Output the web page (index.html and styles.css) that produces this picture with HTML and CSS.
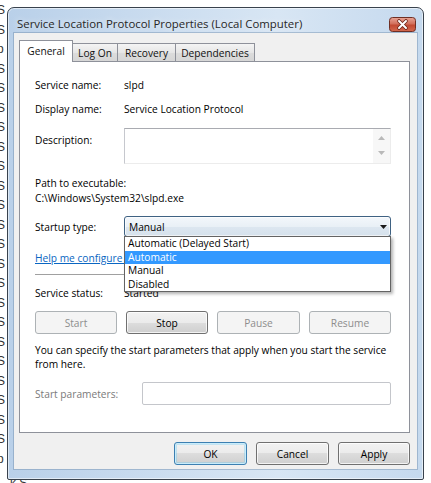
FILE: index.html
```html
<!DOCTYPE html>
<html>
<head>
<meta charset="utf-8">
<link rel="stylesheet" href="styles.css">
</head>
<body>
<div class="desktop-list">
  <div>S</div><div>S</div><div>p</div><div>S</div><div>S</div><div>S</div><div>S</div><div>S</div>
  <div>S</div><div>S</div><div>S</div><div>S</div><div>S</div><div>S</div><div>S</div><div>S</div>
  <div>S</div><div>S</div><div>S</div><div>S</div><div>S</div><div>S</div><div>S</div><div>p</div>
</div>
<div class="desktop-foot">k S</div>

<div class="window">
  <div class="titlebar">
    <span class="title">Service Location Protocol Properties (Local Computer)</span>
    <div class="close-btn">
      <svg width="27" height="15" viewBox="0 0 27 15">
        <defs>
          <linearGradient id="cg" x1="0" y1="0" x2="0" y2="1">
            <stop offset="0" stop-color="#e8a596"/>
            <stop offset="0.45" stop-color="#d2705c"/>
            <stop offset="0.55" stop-color="#c24a33"/>
            <stop offset="1" stop-color="#d3694f"/>
          </linearGradient>
        </defs>
        <rect x="0.5" y="0.5" width="26" height="14" rx="3" fill="url(#cg)" stroke="#6e2f24"/>
        <path d="M10 4 L17 11 M17 4 L10 11" stroke="#6a2418" stroke-width="3.6" stroke-linecap="round"/>
        <path d="M10 4 L17 11 M17 4 L10 11" stroke="#ffffff" stroke-width="2" stroke-linecap="round"/>
      </svg>
    </div>
  </div>

  <div class="client">
    <div class="tabs">
      <div class="tab tab-active">General</div>
      <div class="tab tab-logon">Log On</div>
      <div class="tab tab-recovery">Recovery</div>
      <div class="tab tab-deps">Dependencies</div>
    </div>

    <div class="panel">
      <div class="row row-first">
        <span class="label">Service name:</span>
        <span class="value">slpd</span>
      </div>
      <div class="row row-display">
        <span class="label">Display name:</span>
        <span class="value">Service Location Protocol</span>
      </div>
      <div class="row row-desc">
        <span class="label label-desc">Description:</span>
        <div class="desc-box">
          <div class="desc-scroll">
            <svg width="7" height="4" viewBox="0 0 7 4"><path d="M0 4 L3.5 0 L7 4 Z" fill="#b9b9b9"/></svg>
            <svg width="7" height="4" viewBox="0 0 7 4"><path d="M0 0 L3.5 4 L7 0 Z" fill="#b9b9b9"/></svg>
          </div>
        </div>
      </div>
      <div class="path-label">Path to executable:</div>
      <div class="path-value">C:\Windows\System32\slpd.exe</div>

      <div class="row row-startup">
        <span class="label">Startup type:</span>
        <div class="combo">
          <span class="combo-text">Manual</span>
          <svg class="combo-arrow" width="7" height="4" viewBox="0 0 7 4"><path d="M0 0 L7 0 L3.5 4 Z" fill="#1a1a1a"/></svg>
          <div class="dropdown">
            <div class="dd-item">Automatic (Delayed Start)</div>
            <div class="dd-item dd-selected">Automatic</div>
            <div class="dd-item">Manual</div>
            <div class="dd-item">Disabled</div>
          </div>
        </div>
      </div>

      <div class="help-link">Help me configure service startup options.</div>
      <div class="separator"></div>

      <div class="row row-status">
        <span class="label">Service status:</span>
        <span class="value">Started</span>
      </div>

      <div class="svc-buttons">
        <div class="btn btn-disabled">Start</div>
        <div class="btn">Stop</div>
        <div class="btn btn-disabled">Pause</div>
        <div class="btn btn-disabled">Resume</div>
      </div>

      <p class="para">You can specify the start parameters that apply when you start the service<br>from here.</p>

      <div class="row row-params">
        <span class="label label-params">Start parameters:</span>
        <div class="params-box"></div>
      </div>
    </div>

    <div class="dialog-buttons">
      <div class="btn btn-default btn-ok">OK</div>
      <div class="btn btn-cancel">Cancel</div>
      <div class="btn btn-apply">Apply</div>
    </div>
  </div>
</div>
</body>
</html>
```

FILE: styles.css
```css
* { box-sizing: border-box; }
html, body { margin: 0; padding: 0; }
body {
  width: 431px;
  height: 483px;
  overflow: hidden;
  position: relative;
  background: #ffffff;
  font-family: "Open Sans", "Noto Sans", sans-serif;
  font-size: 10.2px;
  color: #000;
}

/* desktop behind the dialog */
.desktop-list {
  padding-top: 1px;
  font-family: "Liberation Sans", sans-serif;
  font-size: 12px;
  color: #333;
}
.desktop-list div {
  height: 19.5px;
  line-height: 19.5px;
  margin-left: -3px;
}
.desktop-foot {
  margin-top: 5px;
  margin-left: 10px;
  font-family: "Liberation Sans", sans-serif;
  font-size: 12px;
  line-height: 19px;
  color: #333;
}

/* window */
.window {
  position: absolute;
  left: 7px;
  top: 7px;
  width: 417px;
  height: 473px;
  border: 1px solid #39424d;
  border-radius: 7px 7px 2px 2px;
  background: linear-gradient(to right, #b9d0e9 0%, #cadcef 35%, #d8e6f4 65%, #c5d9ee 100%);
  box-shadow: inset 0 0 0 1px rgba(255,255,255,0.55);
  padding: 0 6px 10px 6px;
  display: flex;
  flex-direction: column;
}
.titlebar {
  height: 25px;
  display: flex;
  align-items: flex-start;
  justify-content: space-between;
  padding: 9px 1px 0 3px;
}
.title {
  font-size: 11.4px;
  line-height: 14px;
  color: #262626;
  text-shadow: 0 0 6px rgba(255,255,255,0.9);
}
.close-btn {
  width: 27px;
  height: 15px;
  display: flex;
}

.client {
  flex: 1;
  background: #f0f0f0;
  box-shadow: 0 0 0 1px rgba(110,140,170,0.45);
  padding: 7px 7px 0 5px;
  display: flex;
  flex-direction: column;
}

/* tabs */
.tabs {
  height: 21px;
  display: flex;
  align-items: flex-end;
}
.tab {
  height: 18px;
  border: 1px solid #8e919a;
  border-bottom: none;
  background: linear-gradient(#f4f4f4, #e6e6e6 50%, #dcdcdc 50%, #d6d6d6);
  text-align: center;
  line-height: 14px;
  padding-top: 2px;
  margin-left: -1px;
  color: #111;
}
.tab-active {
  height: 22px;
  margin-bottom: -1px;
  margin-left: 0;
  width: 54px;
  background: #ffffff;
  padding-top: 3px;
  position: relative;
  z-index: 2;
}
.tab-logon { width: 46px; }
.tab-recovery { width: 59px; }
.tab-deps { width: 80px; }

.panel {
  width: 391px;
  height: 372px;
  border: 1px solid #8e919a;
  background: #ffffff;
  padding: 0 18px 0 15px;
  display: flex;
  flex-direction: column;
}

.row {
  display: flex;
  align-items: center;
  line-height: 14px;
}
.label {
  width: 89px;
  flex: none;
}
.row-first { margin-top: 16px; height: 14px; }
.row-display { margin-top: 10px; height: 14px; }

.row-desc {
  margin-top: 12px;
  height: 36px;
  align-items: flex-start;
}
.label-desc { margin-top: 5px; }
.desc-box {
  flex: 1;
  height: 36px;
  border-top: 1px solid #a9abb1;
  border-left: 1px solid #c6c8ce;
  border-right: 1px solid #ececec;
  border-bottom: 1px solid #ececec;
  display: flex;
  justify-content: flex-end;
}
.desc-scroll {
  width: 17px;
  height: 34px;
  background: #f7f7f7;
  display: flex;
  flex-direction: column;
  align-items: center;
  justify-content: space-between;
  padding: 7px 0 8px;
}

.path-label {
  margin-top: 12px;
  line-height: 15px;
}
.path-value {
  line-height: 15px;
}

.row-startup {
  margin-top: 10px;
  height: 21px;
}
.combo {
  flex: 1;
  height: 21px;
  position: relative;
  border: 1px solid #3f6283;
  border-radius: 3px;
  background: linear-gradient(#f3f7fb, #e9f0f6 50%, #dde7f0 50%, #d5e1ec);
  box-shadow: inset 0 0 0 1px rgba(255,255,255,0.7);
  display: flex;
  align-items: center;
  justify-content: space-between;
  padding: 0 3px 0 4px;
}
.combo-text { line-height: 14px; }

.dropdown {
  position: absolute;
  left: -1px;
  right: -1px;
  top: 19px;
  background: #ffffff;
  border: 1px solid #646464;
  box-shadow: 2px 2px 3px rgba(0,0,0,0.3);
  z-index: 5;
}
.dd-item {
  height: 13.5px;
  line-height: 13.5px;
  padding-left: 3px;
  color: #000;
}
.dd-selected {
  background: #3399ff;
  color: #ffffff;
}

.help-link {
  margin-top: 14px;
  line-height: 14px;
  color: #0a66c2;
  text-decoration: underline;
  white-space: nowrap;
}
.separator {
  margin-top: 9px;
  height: 2px;
  border-top: 1px solid #a0a0a0;
  border-bottom: 1px solid #ffffff;
}
.row-status {
  margin-top: 10px;
  height: 14px;
}

.svc-buttons {
  margin-top: 11px;
  display: grid;
  grid-template-columns: 82px 82px 83px 82px;
  justify-content: space-between;
}

.btn {
  height: 23px;
  border: 1px solid #707070;
  border-radius: 3px;
  background: linear-gradient(#f2f2f2, #ebebeb 50%, #dddddd 50%, #cfcfcf);
  box-shadow: inset 0 0 0 1px rgba(255,255,255,0.75);
  display: flex;
  align-items: center;
  justify-content: center;
  line-height: 14px;
  color: #000;
}
.btn-disabled {
  border-color: #adb2b5;
  background: #f4f4f4;
  box-shadow: none;
  color: #8d8d8d;
}

.para {
  margin: 9px 0 0 0;
  line-height: 14px;
}

.row-params {
  margin-top: 11px;
  height: 23px;
}
.label-params {
  width: 107px;
  color: #7a7a7a;
}
.params-box {
  flex: 1;
  height: 23px;
  border: 1px solid #c4c6cb;
  border-radius: 2px;
  background: #fff;
}

.dialog-buttons {
  margin-top: 9px;
  display: flex;
  justify-content: flex-end;
  gap: 9px;
}
.btn-ok, .btn-cancel { width: 73px; }
.btn-apply { width: 72px; }
.btn-default {
  border-color: #3c7fb1;
  box-shadow: inset 0 0 0 1px #c8ecfb, inset 0 0 0 2px rgba(110,200,240,0.35);
}
```
